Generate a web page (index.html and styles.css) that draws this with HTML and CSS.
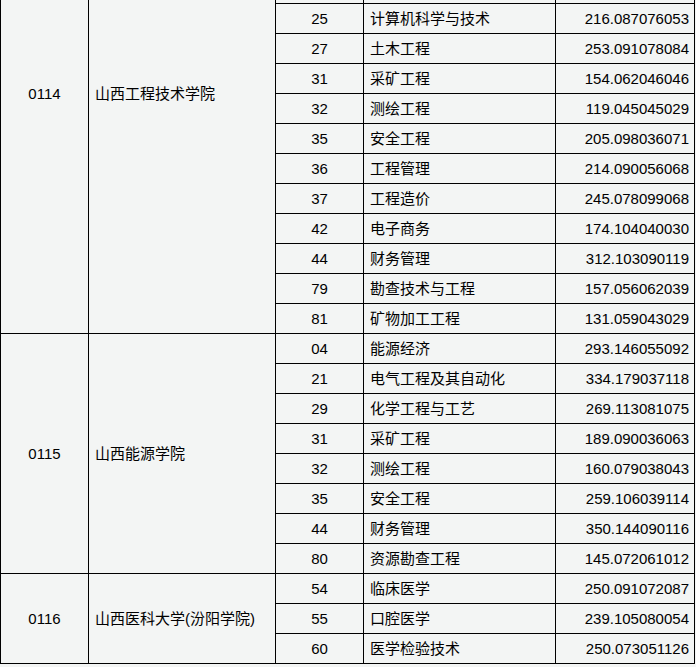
FILE: index.html
```html
<!DOCTYPE html>
<html lang="zh-CN">
<head>
<meta charset="utf-8">
<title>录取分数</title>
<link rel="stylesheet" href="styles.css">
</head>
<body>
<div class="viewport">
  <div class="sheet">
    <div class="cell code span16">0114</div>
    <div class="cell name span16">山西工程技术学院</div>
    <div class="cell num span5"></div>
    <div class="cell major span5"></div>
    <div class="cell score span5"></div>

    <div class="cell num">25</div><div class="cell major">计算机科学与技术</div><div class="cell score">216.087076053</div>
    <div class="cell num">27</div><div class="cell major">土木工程</div><div class="cell score">253.091078084</div>
    <div class="cell num">31</div><div class="cell major">采矿工程</div><div class="cell score">154.062046046</div>
    <div class="cell num">32</div><div class="cell major">测绘工程</div><div class="cell score">119.045045029</div>
    <div class="cell num">35</div><div class="cell major">安全工程</div><div class="cell score">205.098036071</div>
    <div class="cell num">36</div><div class="cell major">工程管理</div><div class="cell score">214.090056068</div>
    <div class="cell num">37</div><div class="cell major">工程造价</div><div class="cell score">245.078099068</div>
    <div class="cell num">42</div><div class="cell major">电子商务</div><div class="cell score">174.104040030</div>
    <div class="cell num">44</div><div class="cell major">财务管理</div><div class="cell score">312.103090119</div>
    <div class="cell num">79</div><div class="cell major">勘查技术与工程</div><div class="cell score">157.056062039</div>
    <div class="cell num">81</div><div class="cell major">矿物加工工程</div><div class="cell score">131.059043029</div>

    <div class="cell code span8">0115</div>
    <div class="cell name span8">山西能源学院</div>
    <div class="cell num">04</div><div class="cell major">能源经济</div><div class="cell score">293.146055092</div>
    <div class="cell num">21</div><div class="cell major">电气工程及其自动化</div><div class="cell score">334.179037118</div>
    <div class="cell num">29</div><div class="cell major">化学工程与工艺</div><div class="cell score">269.113081075</div>
    <div class="cell num">31</div><div class="cell major">采矿工程</div><div class="cell score">189.090036063</div>
    <div class="cell num">32</div><div class="cell major">测绘工程</div><div class="cell score">160.079038043</div>
    <div class="cell num">35</div><div class="cell major">安全工程</div><div class="cell score">259.106039114</div>
    <div class="cell num">44</div><div class="cell major">财务管理</div><div class="cell score">350.144090116</div>
    <div class="cell num">80</div><div class="cell major">资源勘查工程</div><div class="cell score">145.072061012</div>

    <div class="cell code span3">0116</div>
    <div class="cell name span3">山西医科大学(汾阳学院)</div>
    <div class="cell num">54</div><div class="cell major">临床医学</div><div class="cell score">250.091072087</div>
    <div class="cell num">55</div><div class="cell major">口腔医学</div><div class="cell score">239.105080054</div>
    <div class="cell num">60</div><div class="cell major">医学检验技术</div><div class="cell score">250.073051126</div>
  </div>
</div>
</body>
</html>
```

FILE: styles.css
```css
html, body {
  margin: 0;
  padding: 0;
  background: #f3f5f4;
}

body {
  overflow: hidden;
  height: 667px;
  font-family: "Liberation Sans", "Noto Sans CJK SC", sans-serif;
  font-size: 15px;
  color: #000;
}

.viewport {
  height: 667px;
  overflow: hidden;
}

.sheet {
  display: grid;
  grid-template-columns: 88px 187px 88px 192px 139px;
  grid-auto-rows: 30px;
  width: 695px;
  box-sizing: border-box;
  border-left: 1px solid #000;
  border-top: 1px solid #000;
  margin-top: -147px;
}

.cell {
  box-sizing: border-box;
  border-right: 1px solid #000;
  border-bottom: 1px solid #000;
  display: flex;
  align-items: center;
  white-space: nowrap;
  line-height: 1;
}

.code { grid-column: 1; justify-content: center; }
.name { grid-column: 2; padding-left: 6px; }
.num { grid-column: 3; justify-content: center; }
.major { grid-column: 4; padding-left: 6px; }
.score { grid-column: 5; justify-content: flex-end; padding-right: 5px; }

.span16 { grid-row: span 16; }
.span8 { grid-row: span 8; }
.span5 { grid-row: span 5; }
.span3 { grid-row: span 3; }
```
